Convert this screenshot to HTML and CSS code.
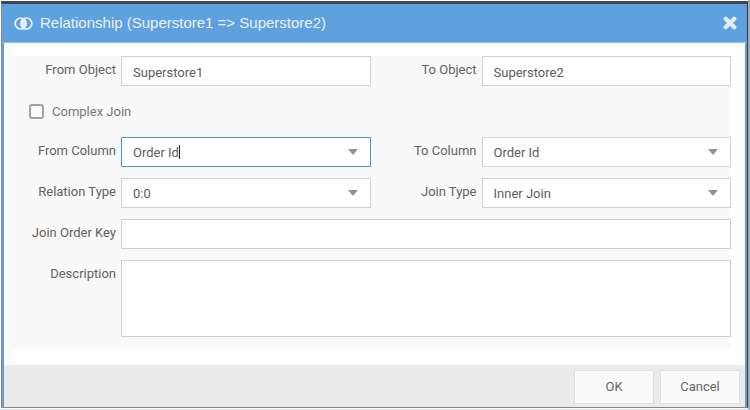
FILE: index.html
```html
<!DOCTYPE html>
<html lang="en">
<head>
<meta charset="utf-8">
<title>Relationship</title>
<link rel="stylesheet" href="styles.css">
</head>
<body>
<div class="page">
<form class="dialog" role="dialog" aria-labelledby="dialog-title">
  <header class="header">
    <svg class="join-icon" viewBox="0 0 18 12" aria-hidden="true">
      <ellipse class="lens" cx="9" cy="6" rx="2.600" ry="4.200"/>
      <circle cx="6.300" cy="6" r="5.200"/>
      <circle cx="11.700" cy="6" r="5.200"/>
    </svg>
    <h1 class="title" id="dialog-title">Relationship (Superstore1 =&gt; Superstore2)</h1>
    <button class="close" type="button" aria-label="Close">
      <svg viewBox="0 0 12 12" aria-hidden="true"><path d="M2.300 2.300L9.700 9.700M9.700 2.300L2.300 9.700"/></svg>
    </button>
  </header>
  <main class="body">
    <div class="fields">
      <label class="label" for="from-object">From Object</label>
      <input class="control" id="from-object" type="text" value="Superstore1">
      <label class="label" for="to-object">To Object</label>
      <input class="control" id="to-object" type="text" value="Superstore2">

      <div class="check-row">
        <input class="check" id="complex" type="checkbox">
        <label for="complex">Complex Join</label>
      </div>

      <label class="label" for="from-column">From Column</label>
      <div class="combo combo-active">
        <select class="control" id="from-column"><option>Order Id</option></select>
        <span class="caret"></span>
      </div>
      <label class="label" for="to-column">To Column</label>
      <div class="combo"><select class="control" id="to-column"><option>Order Id</option></select></div>

      <label class="label" for="relation-type">Relation Type</label>
      <div class="combo"><select class="control" id="relation-type"><option>0:0</option></select></div>
      <label class="label" for="join-type">Join Type</label>
      <div class="combo"><select class="control" id="join-type"><option>Inner Join</option></select></div>

      <label class="label" for="order-key">Join Order Key</label>
      <input class="control wide" id="order-key" type="text">

      <label class="label" for="description">Description</label>
      <textarea class="control wide area" id="description"></textarea>
    </div>
  </main>
  <footer class="footer">
    <button class="button" type="submit">OK</button>
    <button class="button" type="button">Cancel</button>
  </footer>
</form>
</div>
</body>
</html>
```

FILE: styles.css
```css
* {
  box-sizing: border-box;
}

body {
  margin: 0;
  background: #fff;
  color: #626262;
  font: 13px/20px Roboto, "Liberation Sans", sans-serif;
}

.page {
  display: flex;
  min-height: 100vh;
  padding: 1px 0 1px 1px;
  border-right: 2px solid #aaa;
  border-bottom: 1px solid #ddd;
}

.dialog {
  display: flex;
  flex: 1;
  flex-direction: column;
  border: 1px solid #888;
  border-top: 3px solid #41464b;
  border-right-color: #333c48;
  box-shadow: inset 2px 0 #5fa1de, inset -2px 0 #5fa1de;
}

.header {
  display: flex;
  align-items: center;
  height: 39px;
  padding: 0 10px 0 12px;
  border-bottom: 1px solid #91c0ec;
  background: #5fa1de;
  color: #e8f1fb;
}

.join-icon {
  width: 19px;
  height: 13px;
  margin-right: 7px;
  fill: none;
  stroke: currentColor;
  stroke-width: 1.6;
}

.join-icon .lens {
  fill: currentColor;
  stroke: none;
}

.title {
  margin: 0;
  font: 15px/20px "Liberation Sans", Arial, sans-serif;
}

.close {
  display: flex;
  margin-left: auto;
  padding: 0;
  border: 0;
  background: none;
  color: #e1edf9;
}

.close svg {
  width: 14px;
  height: 14px;
  stroke: currentColor;
  stroke-width: 3.6;
  stroke-linecap: round;
}

.body {
  flex: 1;
  margin: 0 2px;
  padding: 13px 14px 16px 6px;
  background: #fff;
}

.fields {
  display: grid;
  grid-template-columns: 111px 1fr 111px 1fr;
  row-gap: 11px;
  padding-bottom: 12px;
  background: #f9f9f9;
}

.label {
  padding: 4px 5px 0 0;
  text-align: right;
}

.control {
  display: block;
  width: 100%;
  height: 30px;
  margin: 0;
  padding: 2px 11px 0;
  border: 1px solid #d0d0d0;
  border-radius: 0;
  outline: 0;
  background: #fff;
  color: #5c5c5c;
  font: inherit;
  appearance: none;
}

select.control {
  padding: 2px 30px 0 11px;
}

.wide {
  grid-column: span 3;
}

.area {
  height: 77px;
  resize: none;
}

.check-row {
  display: flex;
  grid-column: 1 / -1;
  align-items: center;
  height: 29px;
  padding-left: 19px;
  color: #777;
}

.check {
  width: 15px;
  height: 15px;
  margin: 0 8px 0 0;
  border: 2px solid #a2a2a2;
  border-radius: 3px;
  background: #fafafa;
  appearance: none;
}

.combo {
  position: relative;
}

.combo::after {
  position: absolute;
  top: 12px;
  right: 13px;
  border: solid transparent;
  border-width: 6px 5px 0;
  border-top-color: #929292;
  content: "";
  pointer-events: none;
}

.combo-active .control {
  border-color: #4a94d1;
}

.caret {
  position: absolute;
  top: 8px;
  left: 58px;
  width: 1px;
  height: 14px;
  background: #222;
}

.footer {
  display: flex;
  justify-content: flex-end;
  gap: 6px;
  margin: 0 2px;
  padding: 5px 5px 3px;
  background: #ebebeb;
}

.button {
  width: 80px;
  height: 34px;
  padding: 0;
  border: 1px solid #e0e0e0;
  background: #fafafa;
  color: #666;
  font: inherit;
}
```
